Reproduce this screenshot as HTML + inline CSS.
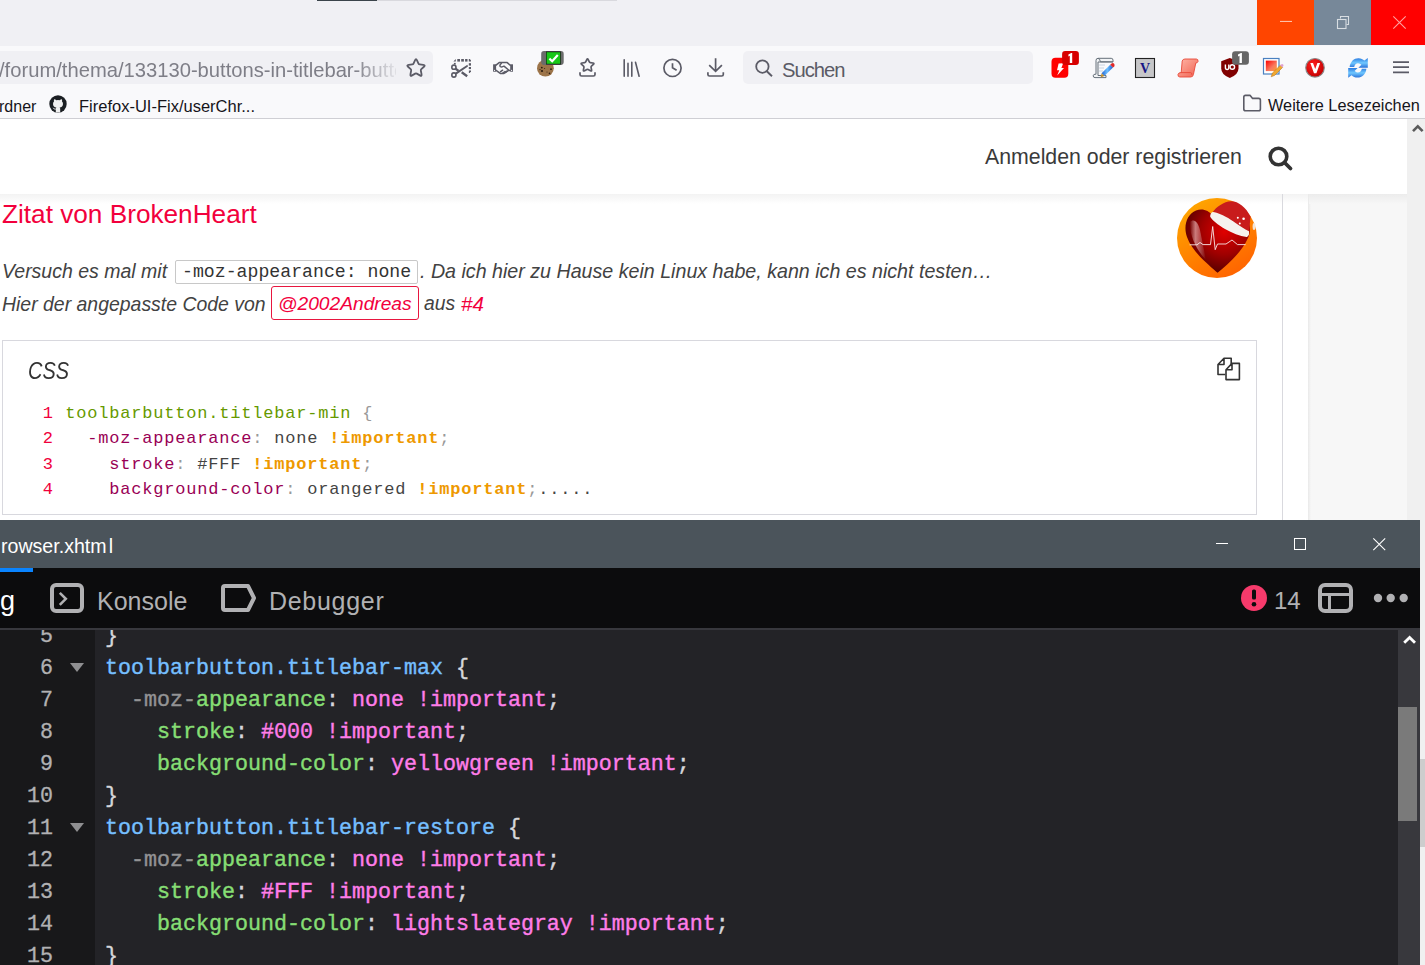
<!DOCTYPE html>
<html><head><meta charset="utf-8">
<style>
*{margin:0;padding:0;box-sizing:border-box}
html,body{width:1425px;height:965px;overflow:hidden;background:#f0f0f4;font-family:"Liberation Sans",sans-serif;position:relative}
.a{position:absolute}
.mono{font-family:"Liberation Mono",monospace}
svg{position:absolute;overflow:visible}
</style></head><body>
<!-- titlebar -->
<div class="a" style="left:317px;top:0;width:60px;height:1px;background:#3b444b"></div>
<div class="a" style="left:377px;top:0;width:240px;height:1px;background:#d9d9de"></div>
<div class="a" style="left:1257px;top:45px;width:168px;height:1px;background:#f6f6f9"></div>
<div class="a" style="left:1257px;top:0;width:57px;height:45px;background:#ff4500"></div>
<div class="a" style="left:1314px;top:0;width:57px;height:45px;background:#778899"></div>
<div class="a" style="left:1371px;top:0;width:54px;height:45px;background:#ff0000"></div>

<!-- toolbar -->
<div class="a" style="left:0;top:46px;width:1425px;height:72px;background:#f9f9fb"></div>
<div class="a" style="left:0;top:118px;width:1425px;height:1px;background:#cfcfd4"></div>
<div class="a" style="left:-10px;top:51px;width:443px;height:33px;background:#f0f0f4;border-radius:5px"></div>
<div class="a" style="left:743px;top:51px;width:290px;height:33px;background:#f0f0f4;border-radius:5px"></div>


<!-- titlebar buttons icons -->
<svg style="left:1279px;top:20px" width="14" height="3"><rect x="1" y="0.9" width="12" height="1.1" fill="#ffc0a8"/></svg>
<svg style="left:1336px;top:15px" width="14" height="15"><path d="M4.5 3.5V1.5H12.5V9.5H10.5" fill="none" stroke="#d8dde2" stroke-width="1.1"/><rect x="1.5" y="4.5" width="8.5" height="9" fill="none" stroke="#d8dde2" stroke-width="1.1"/></svg>
<svg style="left:1392px;top:15px" width="15" height="15"><path d="M1.3 1.3L13.7 13.7M13.7 1.3L1.3 13.7" stroke="#ffa0a0" stroke-width="1.1"/></svg>

<!-- url bar text -->
<div class="a" style="left:0;top:51px;width:396px;height:33px;overflow:hidden">
<div class="a" style="left:-1px;top:7px;font-size:20.2px;line-height:24px;color:#7e7e87;white-space:pre;-webkit-mask-image:linear-gradient(90deg,#000 355px,rgba(0,0,0,0.25) 390px,rgba(0,0,0,0.1) 399px)">/forum/thema/133130-buttons-in-titlebar-buttons</div>
</div>
<!-- star -->
<svg style="left:404px;top:56px" width="24" height="24"><path d="M10.99 4.28Q12.00 2.10 13.01 4.28L14.50 7.52Q14.88 8.34 15.77 8.44L19.32 8.86Q21.70 9.15 19.94 10.78L17.32 13.20Q16.66 13.81 16.84 14.70L17.53 18.20Q18.00 20.55 15.90 19.38L12.79 17.64Q12.00 17.20 11.21 17.64L8.10 19.38Q6.00 20.55 6.47 18.20L7.16 14.70Q7.34 13.81 6.68 13.20L4.06 10.78Q2.30 9.15 4.68 8.86L8.23 8.44Q9.12 8.34 9.50 7.52Z" fill="none" stroke="#5b5b66" stroke-width="1.8" stroke-linejoin="round"/></svg>
<!-- screenshot -->
<svg style="left:450px;top:58px" width="24" height="22"><g fill="#5b5b66"><path d="M3.4 3.6L5.8 1V3.6Z"/><rect x="7.3" y="1" width="2.7" height="2.6"/><rect x="11.2" y="1" width="2.7" height="2.6"/><rect x="15.1" y="1" width="2.4" height="2.6"/><path d="M18.8 1H19.8L21 2.4V3.6H18.8Z"/><rect x="18.8" y="5.2" width="2.2" height="2.4"/><rect x="18.8" y="9" width="2.2" height="2.1"/><path d="M18.9 12.6H21V13.6L19.6 15H18.9Z"/><rect x="3.9" y="4.9" width="1.8" height="1.6"/></g>
<g fill="none" stroke="#5b5b66" stroke-width="1.6"><circle cx="3.9" cy="9.2" r="2.1"/><circle cx="3.9" cy="17" r="2.1"/></g>
<path d="M5.2 14.8L17.4 6.8L18 8.6L6.4 16.4Z" fill="#5b5b66"/><path d="M5.6 10.8L8.6 12.9M11.7 14.3L17.2 18.2" stroke="#5b5b66" stroke-width="2.3"/></svg>
<!-- handshake -->
<svg style="left:492px;top:60px" width="22" height="16"><g fill="#5b5b66"><rect x="1.1" y="4.3" width="3" height="7.4"/><rect x="18.2" y="4.3" width="2.8" height="7.4"/></g><circle cx="2.6" cy="10.4" r="0.6" fill="#f9f9fb"/><circle cx="19.6" cy="10.4" r="0.6" fill="#f9f9fb"/>
<g fill="none" stroke="#5b5b66" stroke-width="1.5" stroke-linejoin="round" stroke-linecap="round"><path d="M4 5.2L7.2 2.6H15.2L18.2 5.2"/><path d="M4.1 10.4L8.6 13.6H11.6L16.6 10.4H18.2"/><path d="M9.4 3.2Q7 5.6 8.4 6.6Q9.8 7.4 12 6.2L16.6 10"/><path d="M8.6 11.6L10.6 10.2M10.8 13.2L13 11.5M13.4 12.4L15 11.2"/></g></svg>
<!-- cookie -->
<svg style="left:535px;top:49px" width="32" height="30"><circle cx="10.4" cy="19.2" r="8.4" fill="#9c7449"/><g fill="#2a1a0e"><circle cx="6.8" cy="18.6" r="0.9"/><circle cx="7" cy="22" r="1.1"/><circle cx="16" cy="20.2" r="0.9"/><circle cx="14.5" cy="24.4" r="0.8"/><circle cx="5" cy="20.6" r="0.6"/><circle cx="9.6" cy="19.4" r="0.5"/><circle cx="12" cy="23" r="0.5"/></g>
<rect x="6.2" y="2.1" width="22.5" height="13.8" rx="2.8" fill="#6b6b6b"/><rect x="11" y="2.5" width="14.8" height="13" fill="#111"/><rect x="11.6" y="3.2" width="13.6" height="11.6" fill="#18c818"/><path d="M14.4 9.6L17.2 12.2L22.8 6" fill="none" stroke="#fff" stroke-width="2.2"/></svg>
<!-- save star -->
<svg style="left:577px;top:56px" width="22" height="23"><path d="M9.79 3.54Q10.50 2.00 11.21 3.54L12.32 5.95Q12.62 6.59 13.31 6.67L15.94 6.98Q17.63 7.18 16.38 8.34L14.44 10.14Q13.92 10.61 14.06 11.30L14.58 13.90Q14.91 15.57 13.42 14.74L11.11 13.44Q10.50 13.10 9.89 13.44L7.58 14.74Q6.09 15.57 6.42 13.90L6.94 11.30Q7.08 10.61 6.56 10.14L4.62 8.34Q3.37 7.18 5.06 6.98L7.69 6.67Q8.38 6.59 8.68 5.95Z" fill="none" stroke="#5b5b66" stroke-width="1.7" stroke-linejoin="round"/><path d="M3 16.2V18.4Q3 20 4.6 20H16.4Q18 20 18 18.4V16.2" fill="none" stroke="#5b5b66" stroke-width="1.7"/></svg>
<!-- library -->
<svg style="left:620px;top:57px" width="24" height="22"><g stroke="#5b5b66" stroke-width="1.6" stroke-linecap="round" fill="none"><path d="M4.2 2.8V19.2M8 6.4V19.2M11.8 5.2V19.2M15.5 5.2L19.1 19.2"/></g></svg>
<!-- clock -->
<svg style="left:661px;top:56px" width="24" height="24"><circle cx="11.5" cy="11.9" r="8.6" fill="none" stroke="#5b5b66" stroke-width="1.7"/><path d="M11.5 7.2V11.8L15.6 14.2" fill="none" stroke="#5b5b66" stroke-width="1.7"/></svg>
<!-- download -->
<svg style="left:705px;top:56px" width="22" height="23"><path d="M10.6 2.2V15.2M4.2 9.2L10.6 15.4L16.9 9.2" fill="none" stroke="#5b5b66" stroke-width="1.7"/><path d="M2.9 16.3V18.4Q2.9 20 4.5 20H16.7Q18.3 20 18.3 18.4V16.3" fill="none" stroke="#5b5b66" stroke-width="1.7"/></svg>
<!-- search field -->
<svg style="left:752px;top:57px" width="24" height="22"><circle cx="10.4" cy="9.6" r="6.2" fill="none" stroke="#5b5b66" stroke-width="1.8"/><path d="M14.8 14.2L20 19.2" stroke="#5b5b66" stroke-width="1.9"/></svg>
<div class="a" style="left:782px;top:58px;font-size:20.2px;letter-spacing:-1px;line-height:24px;color:#5b5b66">Suchen</div>

<!-- extension icons -->
<svg style="left:1050px;top:50px" width="32" height="30"><rect x="1.5" y="7.8" width="16.8" height="20" rx="4" fill="#ff0000"/><path d="M8.6 13.5L13.2 13.2L11.4 18H14L7.2 25.4L9.3 20.2H7Z" fill="#fff"/>
<rect x="12.1" y="1" width="16.8" height="13.9" rx="3" fill="#d70000"/><path d="M18.4 4.6L21.2 3H22.2V12.9H19.8V5.8L18.4 6.6Z" fill="#fff"/></svg>
<svg style="left:1092px;top:57px" width="23" height="22"><defs><linearGradient id="pb" x1="0" y1="0" x2="1" y2="0"><stop offset="0" stop-color="#1f5fd0"/><stop offset="0.5" stop-color="#6cc0ff"/><stop offset="1" stop-color="#1f5fd0"/></linearGradient></defs>
<path d="M4 3.5Q4 1.3 6 1.3H19.2Q21 1.3 21 3.2V5H6V18.5H14V20.6H3Q1.2 20.6 1.2 18.8Q1.2 17.5 3 17.2H4Z" fill="#f2f4f6" stroke="#66707a" stroke-width="1"/><path d="M6 1.3Q8 1.6 8.4 4.8H21" fill="none" stroke="#66707a" stroke-width="1"/>
<path d="M7 8H13M7 11H12M7 14H11" stroke="#c8d4e0" stroke-width="1"/>
<path d="M9.6 16.2L18.2 7.8L21 10.6L12.4 19Z" fill="url(#pb)"/><path d="M18.2 7.8L19.5 6.5Q20.9 5.4 22 6.6Q23.1 8 22.3 9.4L21 10.6Z" fill="#e02828"/><path d="M9.6 16.2L12.4 19L8.6 20.6Z" fill="#c49030"/></svg>
<svg style="left:1134px;top:57px" width="22" height="22"><rect x="1.5" y="1.5" width="19" height="19" fill="#c6c6c8" stroke="#222" stroke-width="1.1"/><text x="11" y="16.2" text-anchor="middle" font-family="Liberation Serif" font-weight="bold" font-size="14" fill="#151585">V</text></svg>
<svg style="left:1176px;top:57px" width="24" height="22"><defs><linearGradient id="sg" x1="0" y1="0" x2="1" y2="1"><stop offset="0" stop-color="#ffb8a8"/><stop offset="1" stop-color="#f06050"/></linearGradient></defs>
<path d="M6.2 4Q6.8 2 9 2H20.4Q22.4 2.2 22 4.6Q21.5 6 19.8 6L17.4 17.6Q17 20 14.6 20H3.8Q1.6 19.8 2 17.4Q2.6 15.6 4.6 15.6H5.2Z" fill="url(#sg)" stroke="#e84838" stroke-width="0.9"/><path d="M4.6 15.6H14.6Q16.2 15.8 15.8 17.8" fill="none" stroke="#e84838" stroke-width="0.9"/></svg>
<svg style="left:1219px;top:50px" width="33" height="30"><path d="M10.8 8L19.5 11.3V18.5Q19.5 24.6 10.8 28Q2.2 24.6 2.2 18.5V11.3Z" fill="#800000"/><path d="M6.4 14.4V17.6Q6.4 19.6 8.1 19.6Q9.8 19.6 9.8 17.6V14.4" fill="none" stroke="#fff" stroke-width="1.4"/><circle cx="13.3" cy="17" r="2.3" fill="none" stroke="#fff" stroke-width="1.4"/>
<rect x="13.1" y="1.2" width="16.8" height="13.6" rx="3" fill="#666"/><path d="M19 4.6L21.9 3H22.9V12.9H20.5V5.8L19 6.6Z" fill="#fff"/></svg>
<svg style="left:1262px;top:57px" width="23" height="22"><defs><linearGradient id="ig" x1="0" y1="0" x2="1" y2="1"><stop offset="0" stop-color="#ff0000"/><stop offset="0.6" stop-color="#f87a60"/><stop offset="1" stop-color="#ffa030"/></linearGradient></defs>
<rect x="1.5" y="1.5" width="15.5" height="15.5" fill="#fff" stroke="#4a80c0" stroke-width="1.2"/><rect x="3.8" y="3.6" width="11" height="10.5" fill="url(#ig)"/>
<path d="M9.2 19.8L10.4 16L18.4 8.2L20.6 10.4L12.6 18.4Z" fill="#f0a830" stroke="#b07020" stroke-width="0.5"/><path d="M18.2 8.4L19 7.6Q20.2 6.6 21.2 7.6Q22 8.6 21 9.6L20.4 10.2Z" fill="#e0a0d0"/></svg>
<svg style="left:1304px;top:57px" width="22" height="22"><defs><radialGradient id="vg" cx="0.4" cy="0.35" r="0.7"><stop offset="0" stop-color="#ff2020"/><stop offset="1" stop-color="#c00000"/></radialGradient></defs>
<circle cx="11" cy="10.8" r="9.3" fill="url(#vg)" stroke="#8a8a8a" stroke-width="1.1"/><path d="M6.3 6H9L11.2 12L13.4 6H16.1L12.4 16.2H10Z" fill="#fff"/></svg>
<svg style="left:1346px;top:57px" width="24" height="22"><defs><linearGradient id="yg" x1="0" y1="0" x2="0" y2="1"><stop offset="0" stop-color="#2a7ae0"/><stop offset="0.5" stop-color="#70c8ff"/><stop offset="1" stop-color="#2a70d8"/></linearGradient></defs>
<path d="M3.6 10C4.2 4.6 8 1.2 12.4 1.2C15 1.2 17 2.2 18.4 3.6L21.8 1V10.8H12.4L15.4 7.8C14.6 7 13.4 6.2 12 6.2C10 6.2 8.6 7.6 8.2 10Z" fill="url(#yg)"/>
<path d="M20.4 11.8C19.8 17.2 16 20.6 11.6 20.6C9 20.6 7 19.6 5.6 18.2L2.2 20.8V11H11.6L8.6 14C9.4 14.8 10.6 15.6 12 15.6C14 15.6 15.4 14.2 15.8 11.8Z" fill="url(#yg)"/></svg>
<!-- hamburger -->
<svg style="left:1392px;top:58px" width="18" height="18"><g stroke="#5b5b66" stroke-width="1.7"><path d="M1 4.1H17M1 9.2H17M1 14.4H17"/></g></svg>

<!-- bookmarks bar -->
<div class="a" style="left:-1px;top:96.5px;font-size:16px;line-height:20px;color:#15141a;white-space:pre">rdner</div>
<svg style="left:49px;top:95px" width="18" height="18"><circle cx="9" cy="9" r="8.7" fill="#1b1f23"/><path d="M6.8 17.5V14.4Q6.6 13.2 7.4 12.6Q4.2 12.2 4 9Q4 7.6 5 6.6Q4.7 5.5 5.1 4.3Q6.2 4.3 7.4 5.2Q9 4.8 10.6 5.2Q11.8 4.3 12.9 4.3Q13.3 5.5 13 6.6Q14 7.6 14 9Q13.8 12.2 10.6 12.6Q11.4 13.2 11.2 14.4V17.5Z" fill="#f0f0f0"/><path d="M6.8 14.2Q5 14.6 4.2 12.8" fill="none" stroke="#f0f0f0" stroke-width="0.9"/></svg>
<div class="a" style="left:79px;top:96px;font-size:16.5px;line-height:20px;color:#15141a;white-space:pre">Firefox-UI-Fix/userChr...</div>
<svg style="left:1242px;top:94px" width="22" height="18"><path d="M1.8 3Q1.8 1.4 3.4 1.4H8.2L10.6 4.4H16.6Q18.4 4.4 18.4 6.2V15Q18.4 16.8 16.6 16.8H3.6Q1.8 16.8 1.8 15Z" fill="none" stroke="#5b5b66" stroke-width="1.6" stroke-linejoin="round"/></svg>
<div class="a" style="left:1268px;top:95px;font-size:16.3px;line-height:20px;color:#15141a;white-space:pre">Weitere Lesezeichen</div>
<!-- content -->
<div class="a" style="left:0;top:119px;width:1407px;height:401px;background:#fff"></div>
<div class="a" style="left:1308px;top:194px;width:99px;height:326px;background:#f7f7f7"></div>
<div class="a" style="left:1407px;top:119px;width:18px;height:401px;background:#f0f0f0"></div>

<!-- devtools -->
<div class="a" style="left:0;top:520px;width:1420px;height:48px;background:#4b545b"></div>
<div class="a" style="left:1420px;top:520px;width:5px;height:445px;background:#f0f0f0"></div>
<div class="a" style="left:1420px;top:759px;width:5px;height:88px;background:#cdcdcd"></div>
<div class="a" style="left:0;top:568px;width:1420px;height:60px;background:#0c0c0d"></div>
<div class="a" style="left:0;top:568px;width:33px;height:4px;background:#0a84ff"></div>
<div class="a" style="left:0;top:628px;width:1420px;height:2px;background:#38383d"></div>
<div class="a" style="left:0;top:630px;width:95px;height:335px;background:#18181a"></div>
<div class="a" style="left:95px;top:630px;width:1303px;height:335px;background:#232327"></div>
<div class="a" style="left:1398px;top:630px;width:22px;height:335px;background:#38383d"></div>



<!-- web content -->
<div class="a" style="left:0;top:194px;width:1308px;height:10px;background:linear-gradient(#f3f3f3,#fff)"></div>
<div class="a" style="left:1282px;top:194px;width:1px;height:326px;background:#d9d9de"></div>
<div class="a" style="left:1308px;top:194px;width:3px;height:326px;background:linear-gradient(90deg,#e9e9e9,#f7f7f7)"></div>
<div class="a" style="left:1309px;top:194px;width:98px;height:10px;background:linear-gradient(#ececec,#f7f7f7)"></div>
<div class="a" style="left:985px;top:143px;font-size:21.3px;line-height:28px;color:#3a3a3a;white-space:pre">Anmelden oder registrieren</div>
<svg style="left:1266px;top:144px" width="30" height="30"><circle cx="12.5" cy="12.5" r="8.3" fill="none" stroke="#333" stroke-width="3.6"/><path d="M19 19L24.5 24.5" stroke="#333" stroke-width="3.8" stroke-linecap="round"/></svg>
<svg style="left:1409px;top:122px" width="16" height="12"><path d="M4 9.2L8.8 4.4L13.6 9.2" fill="none" stroke="#5a5a5a" stroke-width="2.6"/></svg>
<div class="a" style="left:2px;top:199px;font-size:26.2px;line-height:30px;color:#f2003c;white-space:pre">Zitat von BrokenHeart</div>
<div class="a" style="left:2px;top:259.5px;font-size:19.5px;line-height:22px;color:#424242;font-style:italic;white-space:pre">Versuch es mal mit</div>
<div class="a" style="left:175px;top:260px;width:243px;height:24px;border:1px solid #c8c8c8;border-radius:2px;background:#fff"></div>
<div class="a mono" style="left:182px;top:261px;font-size:18.2px;line-height:22px;color:#333;white-space:pre">-moz-appearance: none</div>
<div class="a" style="left:420px;top:259.5px;font-size:19.65px;line-height:22px;color:#424242;font-style:italic;white-space:pre">. Da ich hier zu Hause kein Linux habe, kann ich es nicht testen…</div>
<div class="a" style="left:2px;top:293px;font-size:19.45px;line-height:22px;color:#424242;font-style:italic;white-space:pre">Hier der angepasste Code von</div>
<div class="a" style="left:271px;top:286px;width:148px;height:34px;border:1px solid #e8163f;border-radius:3px"></div>
<div class="a" style="left:278px;top:293px;font-size:19.2px;line-height:22px;color:#f2003c;font-style:italic;white-space:pre">@2002Andreas</div>
<div class="a" style="left:424px;top:293px;font-size:19.3px;line-height:22px;color:#424242;font-style:italic;white-space:pre">aus</div>
<div class="a" style="left:461px;top:293px;font-size:20.6px;line-height:22px;color:#f2003c;font-style:italic;white-space:pre">#4</div>
<!-- code box -->
<div class="a" style="left:2px;top:340px;width:1255px;height:175px;border:1px solid #d8d8de;background:#fff"></div>
<div class="a" style="left:28px;top:357px;font-size:24px;line-height:28px;color:#333;font-style:italic;transform:scaleX(0.83);transform-origin:0 0">CSS</div>
<svg style="left:1216px;top:356px" width="26" height="26"><g fill="none" stroke="#333" stroke-width="1.6" stroke-linejoin="round"><path d="M2 8.5L8 2.2H15.2V8.5M9.3 18.5H2V8.5H8V2.2"/><path d="M10 13.7L16 7.4H23.4V23.6H10Z M16 7.4V13.7H10"/></g></svg>
<div class="a mono" style="left:36px;top:401px;width:17px;text-align:right;font-size:17px;line-height:25.45px;color:#f0003c">1<br>2<br>3<br>4</div>
<div class="a mono" style="left:65.2px;top:401px;font-size:17px;letter-spacing:0.8px;line-height:25.45px;color:#444;white-space:pre"><span style="color:#690">toolbarbutton.titlebar-min</span> <span style="color:#999">{</span>
  <span style="color:#905">-moz-appearance</span><span style="color:#999">:</span> none <b style="color:#e90">!important</b><span style="color:#999">;</span>
    <span style="color:#905">stroke</span><span style="color:#999">:</span> #FFF <b style="color:#e90">!important</b><span style="color:#999">;</span>
    <span style="color:#905">background-color</span><span style="color:#999">:</span> orangered <b style="color:#e90">!important</b><span style="color:#999">;</span>.....</div>
<!-- avatar -->
<svg style="left:1170px;top:192px" width="95" height="93" viewBox="0 0 95 93">
<defs><linearGradient id="og" x1="0.2" y1="0" x2="0.8" y2="1"><stop offset="0" stop-color="#ffa800"/><stop offset="1" stop-color="#ff6000"/></linearGradient>
<radialGradient id="hg" cx="0.6" cy="0.35" r="0.65"><stop offset="0" stop-color="#e00000"/><stop offset="0.55" stop-color="#a00000"/><stop offset="1" stop-color="#5a0000"/></radialGradient>
<linearGradient id="hl" x1="0" y1="0" x2="1" y2="0"><stop offset="0" stop-color="#fff" stop-opacity="0"/><stop offset="0.35" stop-color="#ffe0e0" stop-opacity="0.55"/><stop offset="1" stop-color="#fff" stop-opacity="0"/></linearGradient></defs>
<circle cx="47" cy="46" r="40" fill="url(#og)"/>
<path d="M47.6 80.8C40 74 22 60 17 45C13 34 17 22 26 18.5C33 16 39 19 42 23L70 20C80 25 82 38 78 46C72 60 58 72 47.6 80.8Z" fill="url(#hg)"/>
<path d="M20 30C19 42 26 58 36 68L30 38C28 30 24 26 20 30Z" fill="url(#hl)"/>
<path d="M42.8 20C46 15 54 9.5 61 9.2C68 9 76 15 80.6 24.8L79 39.3C72 35 62 30 55.7 25C50 22.5 46 21 42.8 20Z" fill="#c81c1c"/>
<path d="M40.2 23.5C41 21 42 20 43 20.1C48 21 52 23 55.7 24.8C62 28 70 35 79 39.3L79 42.4C78 44.5 77 45 76.5 45C70 44 62 41 55 37C48 33 42 28 40.2 24.8Z" fill="#f6f2ee"/>
<ellipse cx="84" cy="34.5" rx="1.4" ry="3.6" fill="#f3e6d8"/>
<path d="M19.6 52.8H27L30 50.5L33 52.6H40.5L42.7 34.5L45.2 57.7L47.5 52H56L62 48L67.5 52.6H75.6" fill="none" stroke="#f8e8e8" stroke-width="0.9"/>
<circle cx="67.8" cy="25.8" r="1" fill="#fff"/><circle cx="73.6" cy="26.8" r="1.3" fill="#fff"/><circle cx="69.8" cy="31.6" r="1" fill="#fff"/>
</svg>
<!-- devtools header -->
<div class="a" style="left:1px;top:532px;font-size:19.6px;line-height:28px;color:#fff;white-space:pre">rowser.xhtm<span style="margin-left:2px">l</span></div>
<svg style="left:1216px;top:543px" width="14" height="2"><rect width="12" height="1" fill="#fff"/></svg>
<svg style="left:1294px;top:538px" width="14" height="14"><rect x="0.5" y="0.5" width="11" height="11" fill="none" stroke="#fff" stroke-width="1"/></svg>
<svg style="left:1373px;top:538px" width="14" height="14"><path d="M0.3 0.3L12.2 12.2M12.2 0.3L0.3 12.2" stroke="#fff" stroke-width="1.1"/></svg>
<div class="a" style="left:0px;top:587px;font-size:27px;line-height:28px;color:#fff">g</div>
<svg style="left:50px;top:583px" width="34" height="30"><rect x="2" y="2" width="30" height="26" rx="4" fill="none" stroke="#b1b1b3" stroke-width="4"/><path d="M9.8 9.8L15.8 15.8L9.8 21.8" fill="none" stroke="#b1b1b3" stroke-width="2.6"/></svg>
<div class="a" style="left:97px;top:587px;font-size:25px;line-height:28px;color:#b1b1b3">Konsole</div>
<svg style="left:221px;top:584px" width="36" height="28"><path d="M4 2H27L33 14L27 26H4Q2 26 2 24V4Q2 2 4 2Z" fill="none" stroke="#b1b1b3" stroke-width="4" stroke-linejoin="round"/></svg>
<div class="a" style="left:269px;top:587px;font-size:25px;letter-spacing:0.7px;line-height:28px;color:#b1b1b3">Debugger</div>
<svg style="left:1241px;top:585px" width="26" height="26"><circle cx="13" cy="13" r="13" fill="#f73a6b"/><rect x="11" y="4.5" width="4" height="10" rx="1.5" fill="#0c0c0d"/><circle cx="13" cy="19.3" r="2.3" fill="#0c0c0d"/></svg>
<div class="a" style="left:1274px;top:587px;font-size:24px;line-height:28px;color:#b1b1b3">14</div>
<svg style="left:1318px;top:583px" width="36" height="30"><rect x="2" y="2" width="31" height="26" rx="5" fill="none" stroke="#b1b1b3" stroke-width="4"/><rect x="3" y="10" width="29" height="3" fill="#b1b1b3"/><rect x="10" y="11" width="3" height="16" fill="#b1b1b3"/></svg>
<svg style="left:1370px;top:590px" width="40" height="16"><circle cx="8" cy="8" r="4.2" fill="#b1b1b3"/><circle cx="20.7" cy="8" r="4.2" fill="#b1b1b3"/><circle cx="33.7" cy="8" r="4.2" fill="#b1b1b3"/></svg>
<svg style="left:1402px;top:634px" width="16" height="12"><path d="M2.2 8.8L7.6 3.4L13 8.8" fill="none" stroke="#fff" stroke-width="2.8"/></svg>
<div class="a" style="left:1398px;top:707px;width:19px;height:114px;background:#7a7a7a"></div>
<!-- editor -->
<div class="a" style="left:0;top:630px;width:1397px;height:335px;overflow:hidden">
<div class="a mono" id="gut" style="left:0;top:-9px;width:53px;font-size:21.67px;line-height:32px;color:#b1b1b3;text-align:right;-webkit-text-stroke:0.3px currentColor">5<br>6<br>7<br>8<br>9<br>10<br>11<br>12<br>13<br>14<br>15</div>
<svg style="left:70px;top:33px" width="14" height="9"><path d="M0 0H14L7 9Z" fill="#8f8f91"/></svg>
<svg style="left:70px;top:193px" width="14" height="9"><path d="M0 0H14L7 9Z" fill="#8f8f91"/></svg>
<div class="a mono" id="code" style="left:105px;top:-9px;font-size:21.67px;line-height:32px;color:#d7d7db;white-space:pre;-webkit-text-stroke:0.4px currentColor">}
<span style="color:#75bfff">toolbarbutton.titlebar-max</span> {
  <span style="color:#939395">-moz-</span><span style="color:#86de74">appearance</span>: <span style="color:#ff7de9">none !important</span>;
    <span style="color:#86de74">stroke</span>: <span style="color:#ff7de9">#000 !important</span>;
    <span style="color:#86de74">background-color</span>: <span style="color:#ff7de9">yellowgreen !important</span>;
}
<span style="color:#75bfff">toolbarbutton.titlebar-restore</span> {
  <span style="color:#939395">-moz-</span><span style="color:#86de74">appearance</span>: <span style="color:#ff7de9">none !important</span>;
    <span style="color:#86de74">stroke</span>: <span style="color:#ff7de9">#FFF !important</span>;
    <span style="color:#86de74">background-color</span>: <span style="color:#ff7de9">lightslategray !important</span>;
}</div>
</div>
</body></html>
